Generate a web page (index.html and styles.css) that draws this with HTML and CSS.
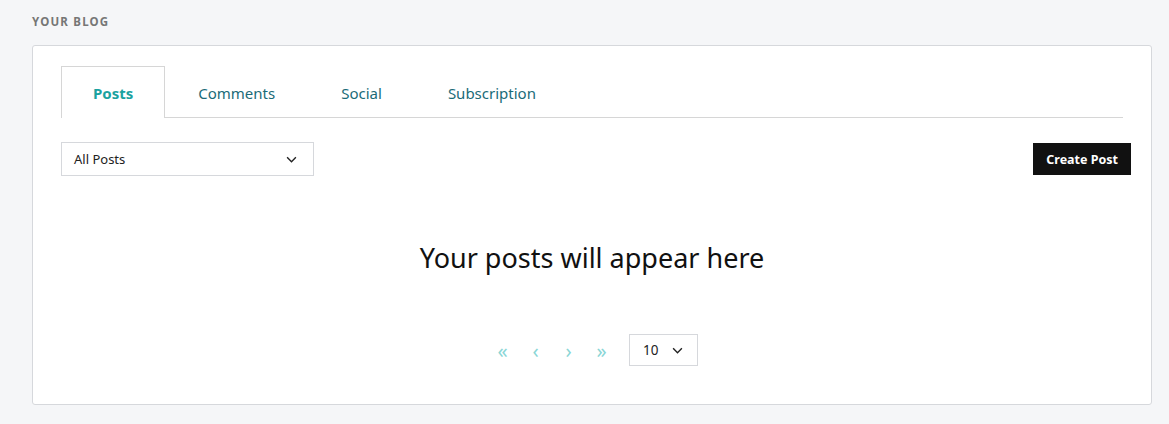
FILE: index.html
```html
<!DOCTYPE html>
<html lang="en">
<head>
  <meta charset="UTF-8">
  <meta name="viewport" content="width=device-width, initial-scale=1.0">
  <title>Your Blog</title>
  <link rel="stylesheet" href="styles.css">
</head>
<body>
  <div class="section-label">YOUR BLOG</div>
  <div class="blog-card">
    <!-- Tabs -->
    <ul class="tabs">
      <li class="tab active">Posts</li>
      <li class="tab">Comments</li>
      <li class="tab">Social</li>
      <li class="tab">Subscription</li>
    </ul>

    <div class="toolbar">
      <div class="select filter-select">
        <span>All Posts</span>
        <svg class="chevron" viewBox="0 0 12 8" width="11" height="7"><path d="M1 1.5 6 6.5 11 1.5" fill="none" stroke="#222" stroke-width="1.6"/></svg>
      </div>
      <button class="create-btn">Create Post</button>
    </div>

    <div class="empty-state">Your posts will appear here</div>

    <div class="pager">
      <span class="pager-btn">&laquo;</span>
      <span class="pager-btn">&lsaquo;</span>
      <span class="pager-btn">&rsaquo;</span>
      <span class="pager-btn">&raquo;</span>
      <div class="select page-size">
        <span>10</span>
        <svg class="chevron" viewBox="0 0 12 8" width="11" height="7"><path d="M1 1.5 6 6.5 11 1.5" fill="none" stroke="#222" stroke-width="1.6"/></svg>
      </div>
    </div>
  </div>
</body>
</html>
```

FILE: styles.css
```css
body {
  margin: 0;
  padding: 14px 17px 19px 32px;
  background-color: #f5f6f8;
  font-family: "Noto Sans", Arial, sans-serif;
  color: #111;
}

.section-label {
  font-size: 11.5px;
  font-weight: bold;
  letter-spacing: 1.2px;
  color: #767676;
  line-height: 16px;
  margin-bottom: 15px;
}

.blog-card {
  background: #fff;
  border: 1px solid #d6d8dc;
  border-radius: 3px;
  padding: 20px 28px 37px 28px;
  height: 301px;
}

.tabs {
  display: flex;
  list-style: none;
  margin: 0;
  padding: 0;
  border-bottom: 1px solid #d6d6d6;
}

.tab {
  padding: 0 32px;
  height: 50px;
  line-height: 52px;
  font-size: 15px;
  color: #1a6b78;
  border: 1px solid transparent;
  border-bottom: none;
  margin-bottom: -1px;
}

.tab.active {
  color: #1ba2a0;
  font-weight: bold;
  background: #fff;
  border-color: #d6d6d6;
  height: 51px;
  padding: 0 31px;
}

.toolbar {
  display: flex;
  justify-content: space-between;
  align-items: flex-start;
  margin-top: 24px;
  margin-right: -8px;
}

.select {
  display: flex;
  align-items: center;
  justify-content: space-between;
  border: 1px solid #d6d8dc;
  box-sizing: border-box;
  background: #fff;
  font-size: 13px;
  color: #222;
}

.filter-select {
  width: 253px;
  height: 34px;
  padding: 0 16px 0 12px;
}

.create-btn {
  margin-top: 1px;
  height: 32px;
  padding: 0 13px;
  border: none;
  background: #111;
  color: #fff;
  font-family: inherit;
  font-size: 12.5px;
  font-weight: bold;
}

.empty-state {
  text-align: center;
  font-size: 27px;
  margin-top: 63px;
  line-height: 38px;
}

.pager {
  display: flex;
  justify-content: center;
  align-items: center;
  margin-top: 57px;
}

.pager-btn {
  width: 33px;
  text-align: center;
  font-size: 20px;
  color: #8ad6d6;
}

.page-size {
  width: 69px;
  height: 32px;
  padding: 0 14px 0 13px;
  margin-left: 11px;
  font-size: 13.5px;
}
```
